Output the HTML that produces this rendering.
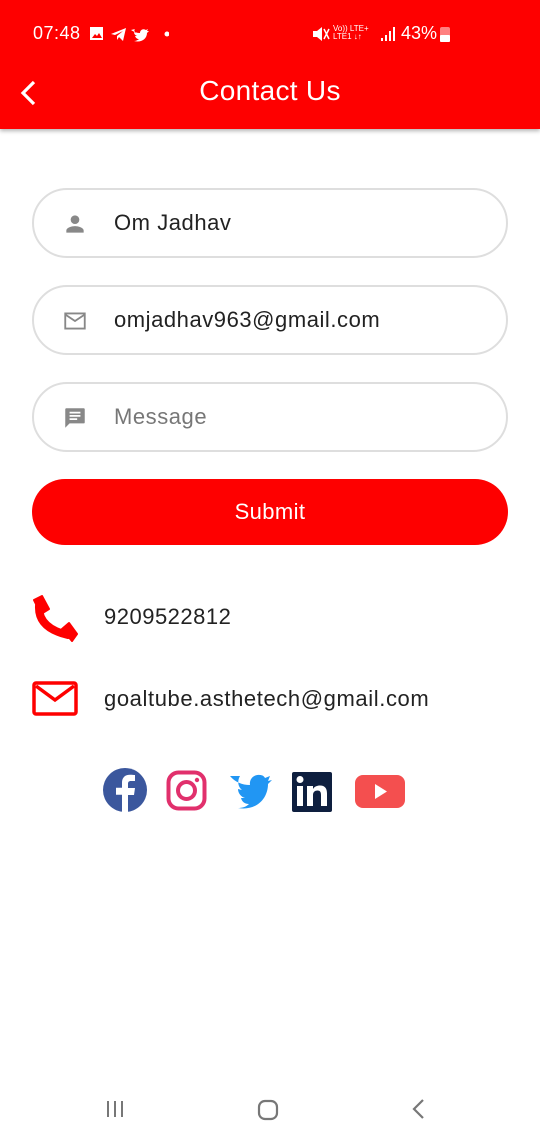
<!DOCTYPE html><html><head><style>
*{margin:0;padding:0;box-sizing:border-box}
body{width:540px;height:1140px;background:#fff;font-family:"Liberation Sans",sans-serif;position:relative;overflow:hidden}
.top{position:absolute;left:0;top:0;width:540px;height:129px;background:#fe0000;box-shadow:0 2px 4px rgba(0,0,0,.3)}
.ab{position:absolute}
.field{position:absolute;left:32px;width:476px;height:70px;border:2px solid #dedede;border-radius:35px}
.field span{position:absolute;left:80px;top:20px;font-size:22px;letter-spacing:0.55px;color:#222}
.field svg{position:absolute;left:28px;top:21px}
</style></head><body>
<div class="top">
<div class="ab" style="left:33px;top:23px;color:#fff;font-size:18px;letter-spacing:0.5px">07:48</div>
<svg class="ab" style="left:89px;top:26px" width="80" height="16"><rect x="1" y="1" width="13" height="13" fill="#fff"/><path d="M3 12l3-4 2 2 2-3 3 5z" fill="#fe0000"/><path d="M22 8l15-6-3 13-4-4-2 3v-4l6-5-8 4z" fill="#fff"/><path d="M42 4c3 2 6 3 9 3 0-3 3-5 6-3l2-1-1 2 2 0-2 2c0 6-6 10-13 8 2 0 4-1 5-2-2 0-3-1-4-3h2c-2-1-3-2-3-4l2 1c-2-2-2-3-1-4z" fill="#fff"/><circle cx="78" cy="8" r="2.5" fill="#fff"/></svg>
<svg class="ab" style="left:312px;top:25px" width="18" height="18"><path d="M1 6h4l5-4v14l-5-4H1z" fill="#fff"/><path d="M12 4l5 10M12 14l5-10" stroke="#fff" stroke-width="1.5"/></svg>
<div class="ab" style="left:333px;top:25px;color:#fff;font-size:8px;line-height:8px">Vo)) LTE+<br>LTE1 ↓↑</div>
<svg class="ab" style="left:380px;top:26px" width="16" height="16"><rect x="1" y="12" width="2" height="3" fill="#fff"/><rect x="5" y="9" width="2" height="6" fill="#fff"/><rect x="9" y="5" width="2" height="10" fill="#fff"/><rect x="13" y="1" width="2" height="14" fill="#fff"/></svg>
<div class="ab" style="left:401px;top:23px;color:#fff;font-size:18px">43%</div>
<svg class="ab" style="left:439px;top:25px" width="12" height="18"><rect x="1" y="2" width="10" height="15" rx="2" fill="#fff" opacity=".5"/><rect x="1" y="10" width="10" height="7" rx="1" fill="#fff"/></svg>
<svg class="ab" style="left:18px;top:79px" width="22" height="28"><path d="M16 3L5 14l11 11" stroke="#fff" stroke-width="3.2" fill="none"/></svg>
<div class="ab" style="left:0;width:540px;top:75px;text-align:center;color:#fff;font-size:28px;letter-spacing:0.3px">Contact Us</div>
</div>
<div class="field" style="top:188px"><svg width="26" height="26" viewBox="0 0 24 24"><path d="M12 12a4 4 0 1 0 0-8 4 4 0 0 0 0 8zm0 2c-3 0-8 1.5-8 4v2h16v-2c0-2.5-5-4-8-4z" fill="#888"/></svg><span>Om Jadhav</span></div>
<div class="field" style="top:285px"><svg width="26" height="26" viewBox="0 0 24 24"><path d="M3 5h18v14H3zM3 6l9 6 9-6" stroke="#888" stroke-width="1.7" fill="none"/></svg><span>omjadhav963@gmail.com</span></div>
<div class="field" style="top:382px"><svg width="26" height="26" viewBox="0 0 24 24"><path d="M4 3h16a1 1 0 0 1 1 1v12a1 1 0 0 1-1 1H7l-4 4V4a1 1 0 0 1 1-1z" fill="#888"/><path d="M7 7h10M7 10h10M7 13h7" stroke="#fff" stroke-width="1.6"/></svg><span style="color:#777">Message</span></div>
<div class="ab" style="left:32px;top:479px;width:476px;height:66px;border-radius:33px;background:#fe0000;color:#fff;font-size:22px;letter-spacing:0.4px;text-align:center;line-height:66px">Submit</div>
<svg class="ab" style="left:30px;top:594px" width="50" height="50" viewBox="0 0 50 50">
<path d="M9 12 Q8 34 38 41" stroke="#fe0000" stroke-width="8" fill="none" stroke-linecap="round"/>
<path d="M4 6 L12 2 L19 15 L11 20 Z" fill="#fe0000" stroke="#fe0000" stroke-width="2" stroke-linejoin="round"/>
<path d="M32 35 L39 29 L47 40 L42 47 Z" fill="#fe0000" stroke="#fe0000" stroke-width="2" stroke-linejoin="round"/>
</svg>
<div class="ab" style="left:104px;top:604px;font-size:22px;letter-spacing:0.5px;color:#222">9209522812</div>
<svg class="ab" style="left:32px;top:681px" width="46" height="35"><rect x="2" y="2" width="42" height="31" rx="2" stroke="#fe0000" stroke-width="3.5" fill="none"/><path d="M4 5l19 14 19-14" stroke="#fe0000" stroke-width="3.5" fill="none"/></svg>
<div class="ab" style="left:104px;top:686px;font-size:22px;letter-spacing:0.6px;color:#222">goaltube.asthetech@gmail.com</div>
<svg class="ab" style="left:103px;top:768px" width="305" height="46">
<circle cx="22" cy="22" r="22" fill="#3b579d"/><path d="M25 46V27h6l1-7h-7v-4c0-2 .7-3 3-3h4V7c-1 0-3-.3-5-.3-5 0-8 3-8 8v5h-6v7h6v19z" fill="#fff"/>
<rect x="65.5" y="4.5" width="36" height="36" rx="10" stroke="#e1306c" stroke-width="4" fill="none"/><circle cx="83.5" cy="22.5" r="8.5" stroke="#e1306c" stroke-width="4" fill="none"/><circle cx="94" cy="12" r="2.2" fill="#e1306c"/>
<path d="M127 8c5 6 12 9 20 9-1-6 4-11 10-10 2 0 4 1 5 3l5-2-2 5 4-1-4 4c0 15-12 27-30 24 4 0 8-1 11-4-4 0-7-2-8-6h4c-4-1-7-5-7-9l4 1c-4-3-5-9-2-14z" fill="#2196f3"/>
<rect x="189" y="4" width="40" height="40" rx="2" fill="#0e1f3f"/><rect x="194" y="18" width="6" height="20" fill="#fff"/><circle cx="197" cy="11.5" r="3.5" fill="#fff"/><path d="M204 18h6v3c1.5-2.5 4-3.5 7-3.5 5 0 7 3 7 8v12.5h-6V27c0-3-1-4.5-3.5-4.5S210 24 210 27v11h-6z" fill="#fff"/>
<rect x="252" y="7" width="50" height="33" rx="8" fill="#f44f4f"/><path d="M272 16v15l12-7.5z" fill="#fff"/>
</svg>
<svg class="ab" style="left:105px;top:1099px" width="22" height="20"><path d="M3 2v16M10 2v16M17 2v16" stroke="#777" stroke-width="2"/></svg>
<svg class="ab" style="left:256px;top:1098px" width="24" height="24"><rect x="3" y="3" width="18" height="18" rx="6" stroke="#777" stroke-width="2.2" fill="none"/></svg>
<svg class="ab" style="left:410px;top:1098px" width="18" height="22"><path d="M13 2l-9 9 9 9" stroke="#777" stroke-width="2.2" fill="none"/></svg>
</body></html>
